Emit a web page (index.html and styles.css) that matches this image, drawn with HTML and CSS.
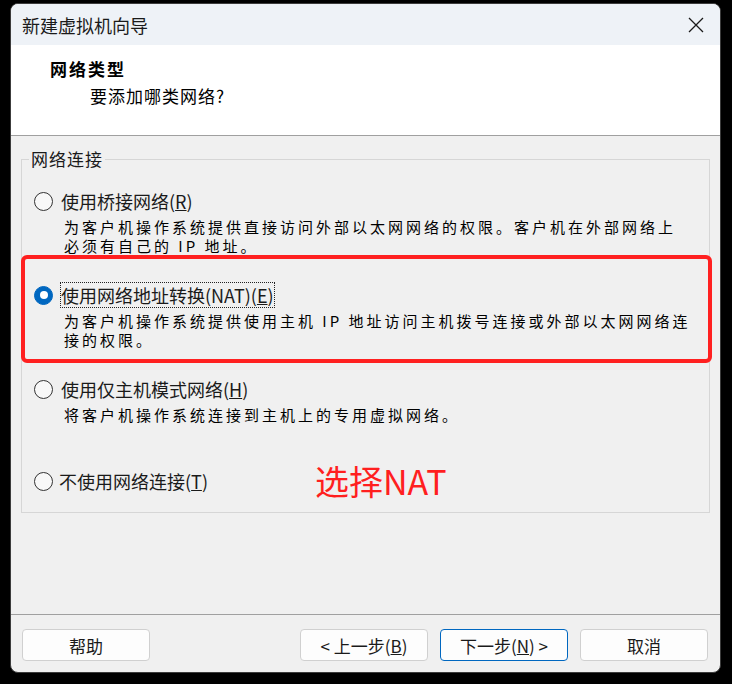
FILE: index.html
```html
<!DOCTYPE html>
<html lang="zh-CN">
<head>
<meta charset="utf-8">
<title>新建虚拟机向导</title>
<link rel="stylesheet" href="styles.css">
</head>
<body>
<div class="window">
  <div class="titlebar">
    <span class="title">新建虚拟机向导</span>
    <svg class="close" width="16" height="16" viewBox="0 0 16 16"><path d="M1 1 L15 15 M15 1 L1 15" stroke="#1a1a1a" stroke-width="1.3" fill="none"/></svg>
  </div>
  <div class="header">
    <div class="h-title">网络类型</div>
    <div class="h-sub">要添加哪类网络?</div>
  </div>
  <div class="body">
    <div class="group">
      <div class="legend">网络连接</div>
      <div class="options">
        <div class="option">
          <div class="opt-row"><span class="radio"></span><span class="opt-label">使用桥接网络(<u>R</u>)</span></div>
          <div class="desc">为客户机操作系统提供直接访问外部以太网网络的权限。客户机在外部网络上<br>必须有自己的 IP 地址。</div>
        </div>
        <div class="option">
          <div class="opt-row"><span class="radio checked"></span><span class="opt-label focus">使用网络地址转换(NAT)(<u>E</u>)</span></div>
          <div class="desc">为客户机操作系统提供使用主机 IP 地址访问主机拨号连接或外部以太网网络连<br>接的权限。</div>
        </div>
        <div class="option short">
          <div class="opt-row"><span class="radio"></span><span class="opt-label">使用仅主机模式网络(<u>H</u>)</span></div>
          <div class="desc">将客户机操作系统连接到主机上的专用虚拟网络。</div>
        </div>
        <div class="option last">
          <div class="opt-row"><span class="radio"></span><span class="opt-label tight">不使用网络连接(<u>T</u>)</span></div>
        </div>
      </div>
    </div>
  </div>
  <div class="footer">
    <button class="btn">帮助</button>
    <button class="btn btn-prev">&lt; 上一步(<u>B</u>)</button>
    <button class="btn btn-next">下一步(<u>N</u>) &gt;</button>
    <button class="btn">取消</button>
  </div>
  <div class="highlight"></div>
  <div class="note">选择NAT</div>
</div>
</body>
</html>
```
FILE: styles.css
```css
html, body {
  margin: 0;
  padding: 0;
}
body {
  background: #000;
  width: 732px;
  height: 684px;
  overflow: hidden;
  font-family: "Noto Sans CJK SC", "Noto Sans", sans-serif;
  color: #1a1a1a;
}
.window {
  position: relative;
  margin: 3px 0 0 10px;
  width: 711px;
  height: 670px;
  box-sizing: border-box;
  border: 1px solid #3c3c3c;
  border-radius: 8px;
  background: #f0f0f0;
  overflow: hidden;
  display: flex;
  flex-direction: column;
}
.titlebar {
  flex: none;
  height: 41px;
  background: #eef2f7;
  display: flex;
  align-items: center;
  justify-content: space-between;
  padding: 0 16px 0 11px;
}
.title {
  font-size: 18px;
  line-height: 24px;
  color: #1a1a1a;
}
.close {
  display: block;
}
.header {
  flex: none;
  height: 90px;
  background: #fff;
  border-bottom: 1px solid #a0a0a0;
}
.h-title {
  margin: 12px 0 0 39px;
  font-size: 17px;
  font-weight: bold;
  letter-spacing: 2px;
  line-height: 24px;
  color: #000;
}
.h-sub {
  margin: 3px 0 0 79px;
  font-size: 17px;
  letter-spacing: 1px;
  line-height: 24px;
  color: #000;
}
.body {
  flex: 1;
  padding: 23px 10px 0;
}
.group {
  border: 1px solid #d6d6d6;
  padding-bottom: 18px;
}
.legend {
  width: fit-content;
  margin: -11px 0 0 7px;
  padding: 0 2px;
  background: #f0f0f0;
  font-size: 17px;
  letter-spacing: 1px;
  line-height: 20px;
  color: #1a1a1a;
}
.options {
  margin-top: 19px;
}
.option {
  height: 94px;
}
.option.short {
  height: 92px;
}
.option.last {
  height: 26px;
}
.opt-row {
  display: flex;
  align-items: center;
  height: 26px;
  padding-left: 12px;
}
.radio {
  flex: none;
  width: 19px;
  height: 19px;
  box-sizing: border-box;
  border: 1.5px solid #333;
  border-radius: 50%;
  background: #f8f8f8;
  display: grid;
  place-items: center;
}
.radio.checked {
  background: #0067c0;
  border-color: #0067c0;
}
.radio.checked::after {
  content: "";
  width: 8px;
  height: 8px;
  border-radius: 50%;
  background: #fff;
}
.opt-label {
  margin-left: 8px;
  font-size: 18px;
  line-height: 24px;
  color: #1a1a1a;
}
.opt-label.tight {
  margin-left: 6px;
}
.opt-label.focus {
  outline: 1px dotted #222;
  outline-offset: 0;
}
.desc {
  margin-top: 3px;
  padding-left: 42px;
  font-size: 15px;
  letter-spacing: 3px;
  line-height: 19px;
  color: #000;
}
.footer {
  flex: none;
  height: 58px;
  box-sizing: border-box;
  border-top: 1px solid #a0a0a0;
  padding: 14px 12px 0 11px;
  display: flex;
  align-items: flex-start;
  gap: 12px;
}
.btn {
  width: 128px;
  height: 32px;
  box-sizing: border-box;
  border: 1px solid #d0d0d0;
  border-radius: 4px;
  background: #fdfdfd;
  font-family: inherit;
  font-size: 17px;
  color: #1a1a1a;
  padding: 0;
  display: flex;
  align-items: center;
  justify-content: center;
}
.btn-prev {
  margin-left: auto;
}
.btn-next {
  border-color: #0067c0;
}
.highlight {
  position: absolute;
  left: 10px;
  top: 251px;
  width: 691px;
  height: 108px;
  box-sizing: border-box;
  border: 4.5px solid #ff2020;
  border-radius: 6px;
}
.note {
  position: absolute;
  left: 304px;
  top: 457px;
  font-size: 34px;
  line-height: 40px;
  color: #ff1f1f;
}
```
